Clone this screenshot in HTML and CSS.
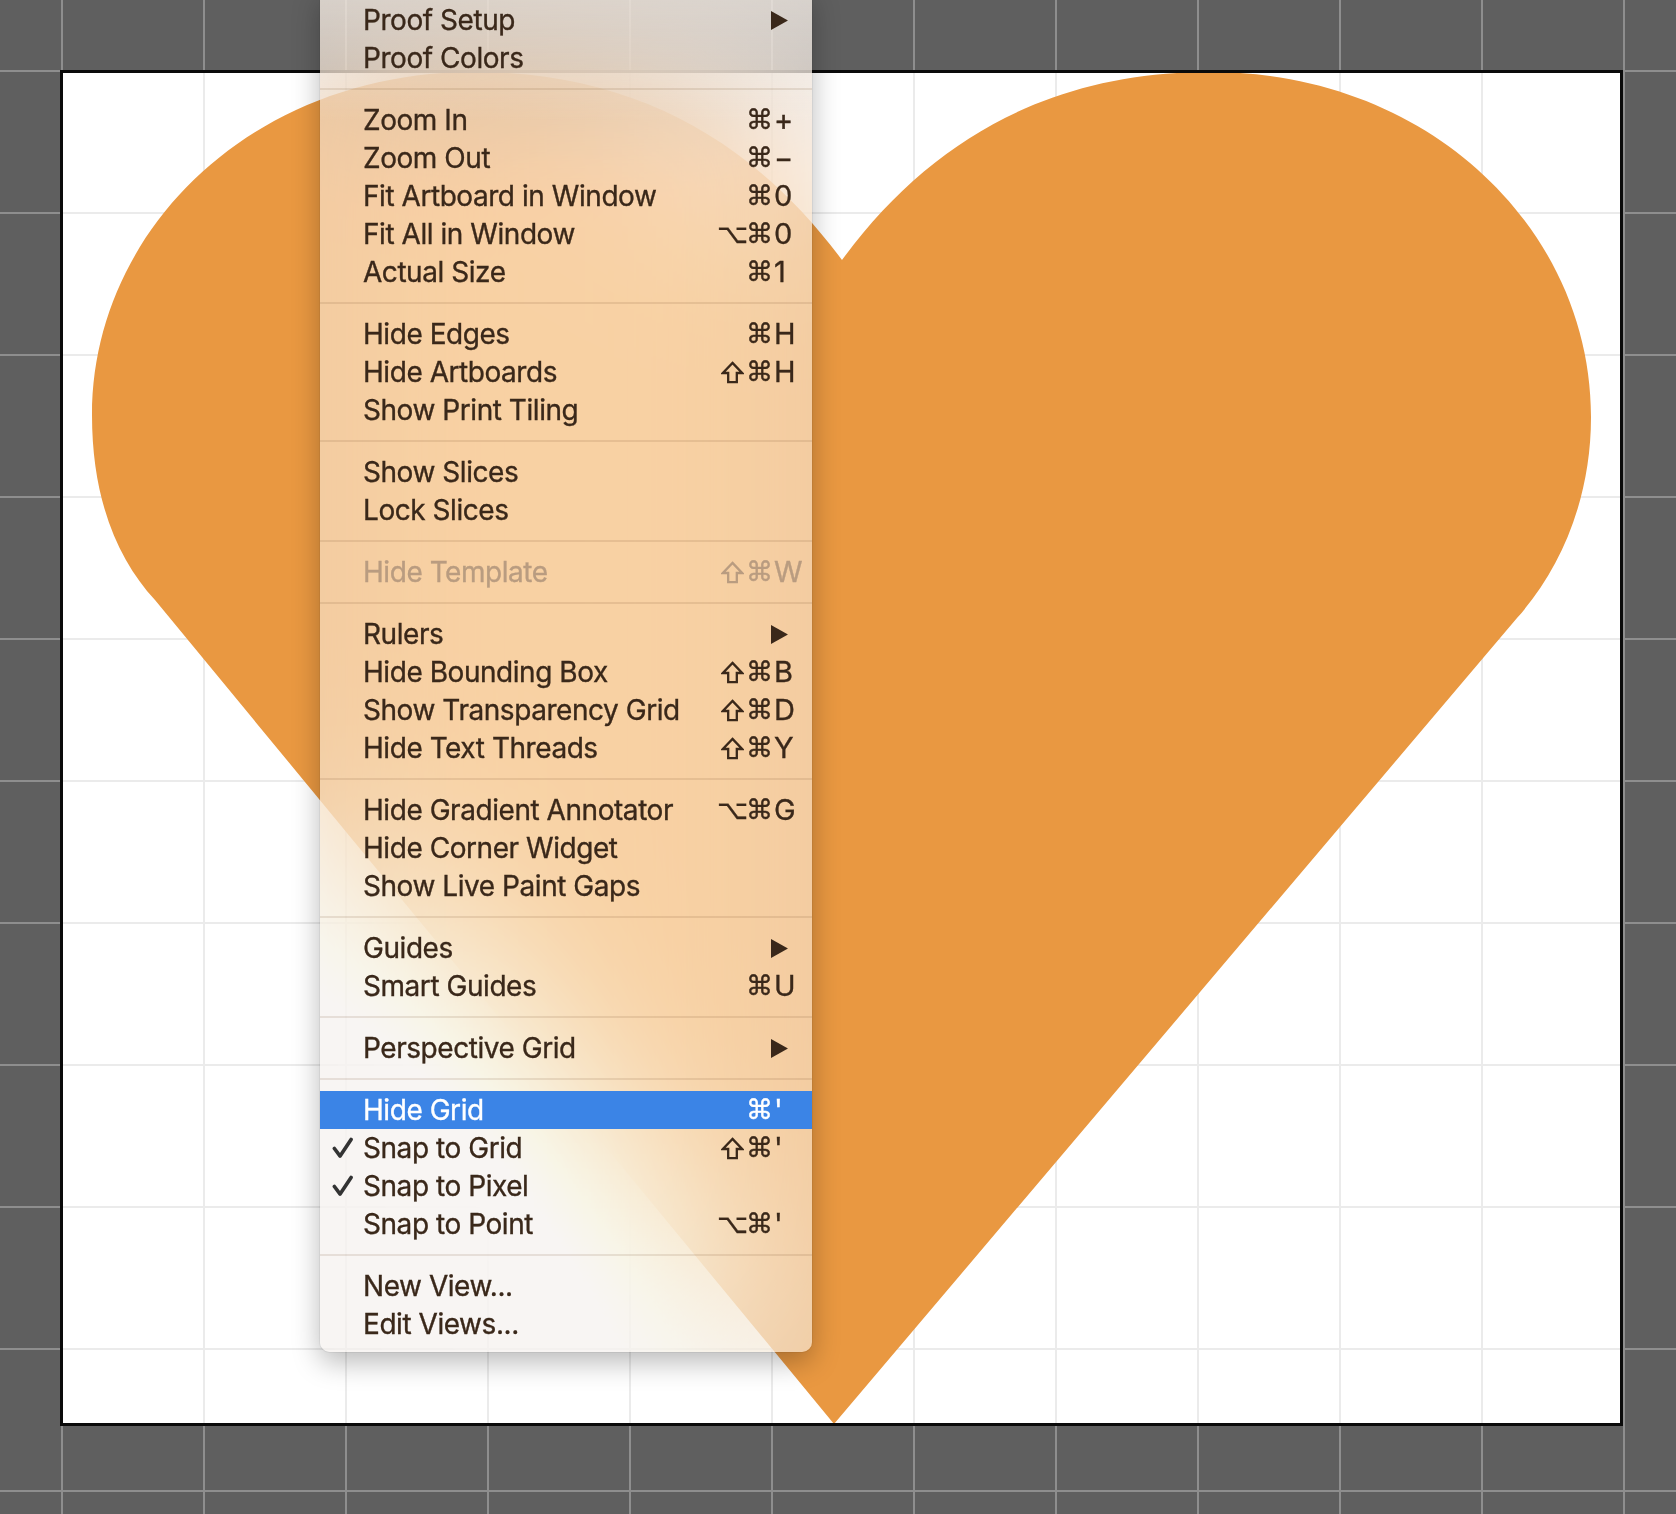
FILE: index.html
```html
<!DOCTYPE html>
<html>
<head>
<meta charset="utf-8">
<link rel="stylesheet" href="styles.css">
</head>
<body>
<div class="canvas">
  <div class="artboard">
    <svg class="heart" viewBox="63 73 1557 1350" preserveAspectRatio="none">
      <path fill="#e99841" d="M 842 260 C 930 140, 1050 72, 1210 72 C 1430 72, 1591 230, 1591 417 C 1591 500, 1560 570, 1517 618 L 834 1424 L 155 600 C 118 560, 92 500, 92 415 C 92 230, 253 72, 473 72 C 633 72, 753 140, 842 260 Z"/>
    </svg>
  </div>

  <div class="menu">
    <div class="item"><span class="check"></span><span class="label">Proof Setup</span><span class="sc"><span class="key"><svg class="arrow" viewBox="0 0 17 19"><polygon points="0,0 17,9.5 0,19"/></svg></span></span></div>
    <div class="item"><span class="check"></span><span class="label">Proof Colors</span></div>
    <div class="sep"></div>
    <div class="item"><span class="check"></span><span class="label">Zoom In</span><span class="sc"><span class="mods"><i>⌘</i></span><span class="key">+</span></span></div>
    <div class="item"><span class="check"></span><span class="label">Zoom Out</span><span class="sc"><span class="mods"><i>⌘</i></span><span class="key">−</span></span></div>
    <div class="item"><span class="check"></span><span class="label">Fit Artboard in Window</span><span class="sc"><span class="mods"><i>⌘</i></span><span class="key">0</span></span></div>
    <div class="item"><span class="check"></span><span class="label">Fit All in Window</span><span class="sc"><span class="mods"><i>⌥</i><i>⌘</i></span><span class="key">0</span></span></div>
    <div class="item"><span class="check"></span><span class="label">Actual Size</span><span class="sc"><span class="mods"><i>⌘</i></span><span class="key">1</span></span></div>
    <div class="sep"></div>
    <div class="item"><span class="check"></span><span class="label">Hide Edges</span><span class="sc"><span class="mods"><i>⌘</i></span><span class="key">H</span></span></div>
    <div class="item"><span class="check"></span><span class="label">Hide Artboards</span><span class="sc"><span class="mods"><i><svg class="shift" viewBox="0 0 24 24"><path d="M12 2 L22 12.5 L16.5 12.5 L16.5 22 L7.5 22 L7.5 12.5 L2 12.5 Z"/></svg></i><i>⌘</i></span><span class="key">H</span></span></div>
    <div class="item"><span class="check"></span><span class="label">Show Print Tiling</span></div>
    <div class="sep"></div>
    <div class="item"><span class="check"></span><span class="label">Show Slices</span></div>
    <div class="item"><span class="check"></span><span class="label">Lock Slices</span></div>
    <div class="sep"></div>
    <div class="item disabled"><span class="check"></span><span class="label">Hide Template</span><span class="sc"><span class="mods"><i><svg class="shift" viewBox="0 0 24 24"><path d="M12 2 L22 12.5 L16.5 12.5 L16.5 22 L7.5 22 L7.5 12.5 L2 12.5 Z"/></svg></i><i>⌘</i></span><span class="key">W</span></span></div>
    <div class="sep"></div>
    <div class="item"><span class="check"></span><span class="label">Rulers</span><span class="sc"><span class="key"><svg class="arrow" viewBox="0 0 17 19"><polygon points="0,0 17,9.5 0,19"/></svg></span></span></div>
    <div class="item"><span class="check"></span><span class="label">Hide Bounding Box</span><span class="sc"><span class="mods"><i><svg class="shift" viewBox="0 0 24 24"><path d="M12 2 L22 12.5 L16.5 12.5 L16.5 22 L7.5 22 L7.5 12.5 L2 12.5 Z"/></svg></i><i>⌘</i></span><span class="key">B</span></span></div>
    <div class="item"><span class="check"></span><span class="label">Show Transparency Grid</span><span class="sc"><span class="mods"><i><svg class="shift" viewBox="0 0 24 24"><path d="M12 2 L22 12.5 L16.5 12.5 L16.5 22 L7.5 22 L7.5 12.5 L2 12.5 Z"/></svg></i><i>⌘</i></span><span class="key">D</span></span></div>
    <div class="item"><span class="check"></span><span class="label">Hide Text Threads</span><span class="sc"><span class="mods"><i><svg class="shift" viewBox="0 0 24 24"><path d="M12 2 L22 12.5 L16.5 12.5 L16.5 22 L7.5 22 L7.5 12.5 L2 12.5 Z"/></svg></i><i>⌘</i></span><span class="key">Y</span></span></div>
    <div class="sep"></div>
    <div class="item"><span class="check"></span><span class="label">Hide Gradient Annotator</span><span class="sc"><span class="mods"><i>⌥</i><i>⌘</i></span><span class="key">G</span></span></div>
    <div class="item"><span class="check"></span><span class="label">Hide Corner Widget</span></div>
    <div class="item"><span class="check"></span><span class="label">Show Live Paint Gaps</span></div>
    <div class="sep"></div>
    <div class="item"><span class="check"></span><span class="label">Guides</span><span class="sc"><span class="key"><svg class="arrow" viewBox="0 0 17 19"><polygon points="0,0 17,9.5 0,19"/></svg></span></span></div>
    <div class="item"><span class="check"></span><span class="label">Smart Guides</span><span class="sc"><span class="mods"><i>⌘</i></span><span class="key">U</span></span></div>
    <div class="sep"></div>
    <div class="item"><span class="check"></span><span class="label">Perspective Grid</span><span class="sc"><span class="key"><svg class="arrow" viewBox="0 0 17 19"><polygon points="0,0 17,9.5 0,19"/></svg></span></span></div>
    <div class="sep"></div>
    <div class="item selected"><span class="check"></span><span class="label">Hide Grid</span><span class="sc"><span class="mods"><i>⌘</i></span><span class="key">'</span></span></div>
    <div class="item"><span class="check"><svg viewBox="0 0 22 22"><path d="M2.5 11.5 L8.5 19.5 L20 2"/></svg></span><span class="label">Snap to Grid</span><span class="sc"><span class="mods"><i><svg class="shift" viewBox="0 0 24 24"><path d="M12 2 L22 12.5 L16.5 12.5 L16.5 22 L7.5 22 L7.5 12.5 L2 12.5 Z"/></svg></i><i>⌘</i></span><span class="key">'</span></span></div>
    <div class="item"><span class="check"><svg viewBox="0 0 22 22"><path d="M2.5 11.5 L8.5 19.5 L20 2"/></svg></span><span class="label">Snap to Pixel</span></div>
    <div class="item"><span class="check"></span><span class="label">Snap to Point</span><span class="sc"><span class="mods"><i>⌥</i><i>⌘</i></span><span class="key">'</span></span></div>
    <div class="sep"></div>
    <div class="item"><span class="check"></span><span class="label">New View...</span></div>
    <div class="item"><span class="check"></span><span class="label">Edit Views...</span></div>
  </div>
</div>
</body>
</html>
```
FILE: styles.css
```css
html, body {
  margin: 0;
  padding: 0;
}

body {
  width: 1676px;
  height: 1514px;
  overflow: hidden;
  background-color: #5f5f5f;
  background-image:
    linear-gradient(to right, #8e8e8e 2px, transparent 2px),
    linear-gradient(to bottom, #8e8e8e 2px, transparent 2px);
  background-size: 142px 142px;
  background-position: 61px 70px;
  font-family: Inter, "Noto Sans", "DejaVu Sans", sans-serif;
}

.canvas {
  position: relative;
  width: 1676px;
  height: 1514px;
  padding: 70px 0 0 60px;
  box-sizing: border-box;
}

.artboard {
  width: 1563px;
  height: 1356px;
  box-sizing: border-box;
  border: 3px solid #0a0a0a;
  background-color: #ffffff;
  background-image:
    linear-gradient(to right, #ebebeb 2px, transparent 2px),
    linear-gradient(to bottom, #ebebeb 2px, transparent 2px);
  background-size: 142px 142px;
  background-position: 140px 139px;
}

.heart {
  display: block;
  width: 100%;
  height: 100%;
}

.menu {
  position: absolute;
  left: 320px;
  top: -9px;
  width: 492px;
  padding: 10px 0 9px;
  border-radius: 0 0 10px 10px;
  background:
    linear-gradient(to bottom, rgba(248, 240, 232, 0.5) 0, rgba(248, 240, 232, 0) 130px),
    rgba(242, 238, 234, 0.56);
  -webkit-backdrop-filter: blur(95px) brightness(1.14);
  backdrop-filter: blur(95px) brightness(1.14);
  box-shadow: 0 10px 28px rgba(0, 0, 0, 0.28), 0 0 0 1px rgba(0, 0, 0, 0.05);
  color: #3a281a;
  font-size: 28px;
  letter-spacing: -0.45px;
  -webkit-text-stroke: 0.35px currentColor;
}

.item {
  display: flex;
  align-items: center;
  height: 38px;
  line-height: 38px;
  white-space: nowrap;
}

.check {
  width: 43px;
  flex: none;
  display: flex;
  align-items: center;
  padding-left: 12px;
  box-sizing: border-box;
}

.check svg {
  width: 21px;
  height: 22px;
  fill: none;
  stroke: #333333;
  stroke-width: 3.8;
  stroke-linecap: round;
  stroke-linejoin: round;
}

.label {
  flex: 1;
}

.sc {
  display: flex;
  align-items: center;
  margin-left: auto;
}

.mods {
  display: flex;
  justify-content: flex-end;
  align-items: center;
}

.mods i {
  font-style: normal;
  width: 27px;
  height: 38px;
  display: flex;
  align-items: center;
  justify-content: center;
  font-family: "DejaVu Sans", sans-serif;
  font-size: 27px;
  letter-spacing: 0;
}

.shift {
  width: 23px;
  height: 23px;
  fill: none;
  stroke: currentColor;
  stroke-width: 2.4;
  stroke-linejoin: miter;
}

.key {
  width: 38px;
  padding-left: 1px;
  display: flex;
  align-items: center;
  font-size: 29px;
}

.arrow {
  width: 17px;
  height: 19px;
  margin-left: -3px;
  fill: #3a281a;
  stroke: none;
}

.disabled {
  color: #b99c80;
}

.selected {
  background: #3b84e6;
  color: #ffffff;
}

.sep {
  height: 24px;
  display: flex;
  align-items: center;
}

.sep::before {
  content: "";
  flex: 1;
  height: 2px;
  background: rgba(110, 70, 30, 0.13);
}
```
